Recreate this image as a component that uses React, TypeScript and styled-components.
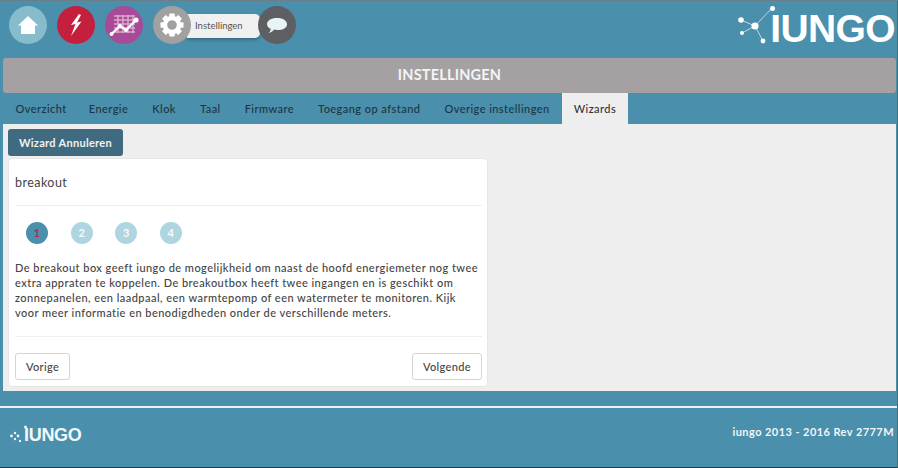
import React from "react";
import styled, { createGlobalStyle } from "styled-components";

const Global = createGlobalStyle`
  html, body { margin: 0; padding: 0; background: #4a8fab; }
  body { font-family: Lato, "Open Sans", sans-serif; width: 898px; height: 468px; overflow: hidden; }
  * { box-sizing: border-box; }
`;

const Page = styled.div`
  width: 898px; height: 468px; display: flex; flex-direction: column;
  background: #4a8fab; border-top: 1px solid #6b7f8a; border-right: 1px solid #4a6a7c; border-bottom: 1px solid #1f3d4c;
`;
const Header = styled.header`
  height: 57px; display: flex; justify-content: space-between; padding: 5px 2px 0 9px;
`;
const Nav = styled.nav`display: flex; align-items: flex-start;`;
const Round = styled.div<{ $bg: string; $gap: number }>`
  position: relative; z-index: ${p => (p.$gap === 0 ? 2 : 1)};
  width: 38px; height: 38px; border-radius: 50%; background: ${p => p.$bg};
  display: flex; align-items: center; justify-content: center; margin-right: ${p => p.$gap}px; flex: none;
`;
const Tip = styled.div`
  height: 24px; width: 73px; margin: 8px -2px 0 -4px; padding-left: 8px; background: #f0f0f0; border-radius: 0 5px 5px 0;
  font-size: 9.5px; line-height: 24px; color: #555; box-shadow: 0 2px 3px rgba(0,0,0,.25); position: relative; z-index: 1; white-space: nowrap;
`;
const Logo = styled.div`display: flex; align-items: flex-start; color: #fff;`;
const LogoWord = styled.span`
  font-family: "Liberation Sans", sans-serif; font-size: 39px; line-height: 45px; font-weight: 700; letter-spacing: -0.6px; margin-left: -5px;
`;
const TitleBar = styled.div`
  height: 35px; margin: 0 1px 0 3px; background: #a5a1a2; border-radius: 3px; color: #f4f4f4;
  font-size: 14.5px; font-weight: 700; letter-spacing: .2px; line-height: 34px; text-align: center;
`;
const Tabs = styled.div`display: flex; height: 31px; padding: 0 0 0 0.5px;`;
const Tab = styled.div<{ $active?: boolean }>`
  padding: 0 12px; font-size: 11px; font-weight: 500; line-height: 31px; letter-spacing: .45px; color: ${p => (p.$active ? "#333" : "#1d3644")};
  background: ${p => (p.$active ? "#eeeeee" : "transparent")};
  &:first-child { padding: 0 10px 0 15px; }
`;
const Content = styled.main`
  height: 267px; margin-left: 3px; margin-right: 1px; background: #eeeeee; padding: 5px 0 0 5px; display: flex; flex-direction: column; align-items: flex-start;
`;
const CancelButton = styled.button`
  width: 115px; height: 27px; border: 0; border-radius: 3px; background: #3f6a80; color: #f2f2f2; padding: 0;
  font-family: Lato, sans-serif; font-size: 11px; font-weight: 700; letter-spacing: .3px;
`;
const Card = styled.section`
  margin-top: 2px; width: 480px; height: 229px; background: #fff; border: 1px solid #e6e6e6; border-radius: 4px;
  padding: 0 5px 0 6px; display: flex; flex-direction: column;
`;
const CardTitle = styled.h2`
  margin: 0; height: 47px; font-size: 12.5px; line-height: 48px; font-weight: 400; letter-spacing: .45px; color: #444; border-bottom: 1px solid #eeeeee;
`;
const Steps = styled.div`display: flex; margin: 16px 0 0 11px;`;
const Step = styled.div<{ $active?: boolean }>`
  width: 22px; height: 22px; margin-right: 22.6px; border-radius: 50%; background: ${p => (p.$active ? "#4a8fab" : "#aed5e0")};
  color: ${p => (p.$active ? "#b02a5f" : "#f8fbfc")}; font-size: 11px; font-weight: 700; line-height: 22px; text-align: center; flex: none;
`;
const Body = styled.p`
  margin: 16px 0 0; height: 77px; font-size: 11px; font-weight: 500; line-height: 15px; letter-spacing: .46px; color: #444; white-space: nowrap;
  border-bottom: 1px solid #eeeeee;
`;
const Actions = styled.div`display: flex; justify-content: space-between; margin-top: 16px;`;
const ActionButton = styled.button`
  height: 27px; padding: 0 10px; background: #fff; border: 1px solid #d5d5d5; border-radius: 3px; color: #444;
  font-family: Lato, sans-serif; font-size: 11px; font-weight: 500; letter-spacing: .35px;
`;
const Spacer = styled.div`height: 15px;`;
const Footer = styled.footer`
  flex: 1; border-top: 2px solid #e9f3f6; display: flex; justify-content: space-between; align-items: flex-start; padding: 15px 2px 0 10px; color: #f1f6f8;
`;
const FootLogo = styled.div`display: flex; align-items: center; height: 24px;`;
const FootWord = styled.span`font-family: "Liberation Sans", sans-serif; font-size: 18px; font-weight: 700; letter-spacing: -0.3px; margin-left: -4px; color: #f1f8fa;`;
const FootText = styled.div`font-size: 11px; font-weight: 700; letter-spacing: .44px; line-height: 18px; padding-right: 1px;`;

const HomeIcon = () => (
  <svg width="22" height="22" viewBox="0 0 22 22"><path d="M11 2 L21 11.5 H18 V20 H4 V11.5 H1 Z" fill="#fff" /></svg>
);
const BoltIcon = () => (
  <svg width="14" height="22" viewBox="0 0 14 22"><path d="M10 0 L2 11 L6.5 10 L2 22 L12.5 7.5 L8 8.5 L12 1 Z" fill="#fff" /></svg>
);
const ChartIcon = () => (
  <svg width="30" height="22" viewBox="0 0 30 22">
    <g stroke="#dfaed0" strokeWidth="1.4">
      {[2, 6, 10, 14, 18].map(y => <path key={y} d={`M5 ${y} H26`} />)}
      {[9, 14, 19, 24].map(x => <path key={x} d={`M${x} 1 V19`} />)}
    </g>
    <path d="M2.5 20 L11 12 L17 16 L27 6" fill="none" stroke="#fff" strokeWidth="2.2" />
    <circle cx="2.5" cy="20" r="2" fill="#fff" /><circle cx="11" cy="12" r="2" fill="#fff" />
    <circle cx="17" cy="16" r="2" fill="#fff" /><circle cx="27" cy="6" r="2.6" fill="#fff" />
  </svg>
);
const GearIcon = () => (
  <svg width="24" height="24" viewBox="0 0 24 24">
    <g fill="#fff">
      {[0, 45, 90, 135, 180, 225, 270, 315].map(a => <rect key={a} x="9.2" y="0.5" width="5.6" height="6" rx="1" transform={`rotate(${a} 12 12)`} />)}
    </g>
    <circle cx="12" cy="12" r="7" fill="none" stroke="#fff" strokeWidth="4.4" />
  </svg>
);
const ChatIcon = () => (
  <svg width="22" height="17" viewBox="0 0 22 19" preserveAspectRatio="none">
    <path d="M11 1 C17 1 21 4 21 8 C21 12 17 14.5 11.5 14.5 C10 14.5 9 14.3 8 14 C7 16 5 17.5 2.5 18 C4 16.5 4.7 15 4.6 13 C2.3 12 1 10 1 8 C1 4 5 1 11 1 Z" fill="#e8f3f5" />
  </svg>
);
const Nodes = () => (
  <svg width="37" height="44" viewBox="0 0 37 44" style={{ flex: "none", display: "block" }}>
    <g stroke="#b9dbe6" strokeWidth="1" fill="none">
      <path d="M3 14 L17 20 L34 2" /><path d="M4 27 L17 20 L25 35" />
    </g>
    <g fill="#fff">
      <circle cx="3" cy="14" r="2.8" /><circle cx="4" cy="27" r="2" /><circle cx="17" cy="20" r="3.6" />
      <circle cx="25" cy="35" r="2.4" /><circle cx="34.5" cy="2.5" r="2.5" />
    </g>
  </svg>
);
const FootDots = () => (
  <svg width="18" height="20" viewBox="0 0 18 20" style={{ flex: "none", display: "block" }}>
    <g fill="#eef7fa">
      <circle cx="1.5" cy="11" r="1.4" /><circle cx="5" cy="8" r="1.2" /><circle cx="8" cy="11" r="1.4" /><circle cx="5" cy="14" r="1.2" />
      <circle cx="10" cy="16" r="1.2" /><circle cx="15.5" cy="2" r="1.5" />
    </g>
  </svg>
);

const tabs = ["Overzicht", "Energie", "Klok", "Taal", "Firmware", "Toegang op afstand", "Overige instellingen"];

export default function App() {
  return (
    <Page>
      <Global />
      <Header>
        <Nav>
          <Round $bg="#86bccb" $gap={10}><HomeIcon /></Round>
          <Round $bg="#c4203e" $gap={10}><BoltIcon /></Round>
          <Round $bg="#a84a98" $gap={10}><ChartIcon /></Round>
          <Round $bg="#a1a1a1" $gap={0}><GearIcon /></Round>
          <Tip>Instellingen</Tip>
          <Round $bg="#5e5f62" $gap={0}><ChatIcon /></Round>
        </Nav>
        <Logo>
          <Nodes />
          <LogoWord>IUNGO</LogoWord>
        </Logo>
      </Header>
      <TitleBar>INSTELLINGEN</TitleBar>
      <Tabs>
        {tabs.map(t => <Tab key={t}>{t}</Tab>)}
        <Tab $active>Wizards</Tab>
      </Tabs>
      <Content>
        <CancelButton>Wizard Annuleren</CancelButton>
        <Card>
          <CardTitle>breakout</CardTitle>
          <Steps>
            <Step $active>1</Step>
            <Step>2</Step>
            <Step>3</Step>
            <Step>4</Step>
          </Steps>
          <Body>
            De breakout box geeft iungo de mogelijkheid om naast de hoofd energiemeter nog twee<br />
            extra appraten te koppelen. De breakoutbox heeft twee ingangen en is geschikt om<br />
            zonnepanelen, een laadpaal, een warmtepomp of een watermeter te monitoren. Kijk<br />
            voor meer informatie en benodigdheden onder de verschillende meters.
          </Body>
          <Actions>
            <ActionButton>Vorige</ActionButton>
            <ActionButton>Volgende</ActionButton>
          </Actions>
        </Card>
      </Content>
      <Spacer />
      <Footer>
        <FootLogo>
          <FootDots />
          <FootWord>IUNGO</FootWord>
        </FootLogo>
        <FootText>iungo 2013 - 2016 Rev 2777M</FootText>
      </Footer>
    </Page>
  );
}
